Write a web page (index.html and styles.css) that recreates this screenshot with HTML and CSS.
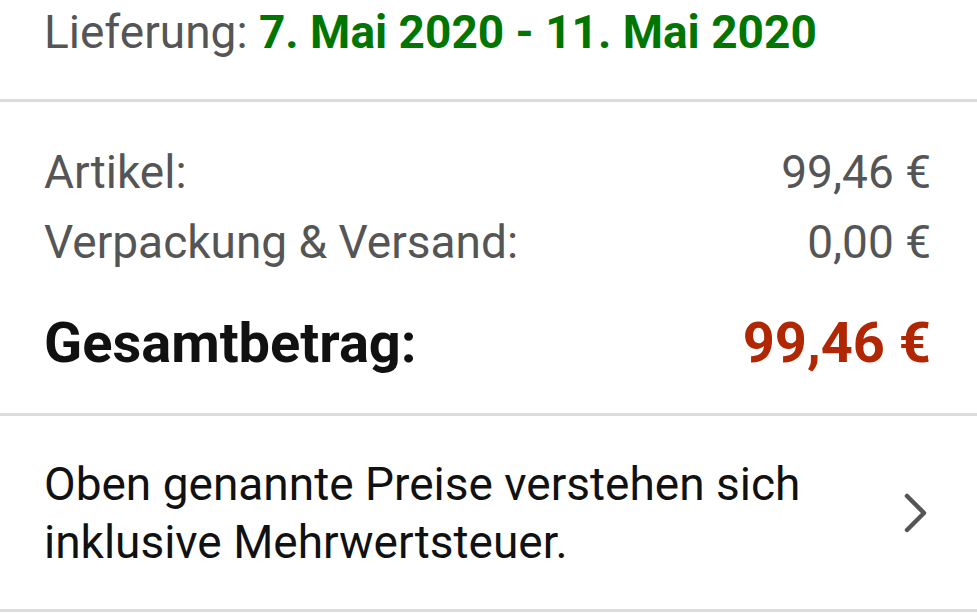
FILE: index.html
```html
<!DOCTYPE html>
<html lang="de">
<head>
<meta charset="utf-8">
<link rel="stylesheet" href="styles.css">
</head>
<body>
<div class="page">
  <section class="delivery">
    <span class="label">Lieferung:</span> <span class="date">7. Mai 2020 - 11. Mai 2020</span>
  </section>
  <section class="summary">
    <div class="row">
      <span>Artikel:</span><span>99,46 €</span>
    </div>
    <div class="row">
      <span>Verpackung &amp; Versand:</span><span>0,00 €</span>
    </div>
    <div class="row total">
      <span>Gesamtbetrag:</span><span class="price">99,46 €</span>
    </div>
  </section>
  <section class="vat">
    <p>Oben genannte Preise verstehen sich<br>inklusive Mehrwertsteuer.</p>
    <svg class="chev" width="26" height="40" viewBox="0 0 26 40"><path d="M4 3 L21 20 L4 37" fill="none" stroke="#555" stroke-width="4.5" stroke-linecap="round" stroke-linejoin="round"/></svg>
  </section>
</div>
</body>
</html>
```
FILE: styles.css
```css
html, body { margin: 0; padding: 0; background: #fff; }
body { font-family: Roboto, "Noto Sans", sans-serif; }
.page { width: 977px; }
.delivery {
  font-size: 46px;
  padding: 0 46px 0 44px;
  height: 102px;
  box-sizing: border-box;
  line-height: 64px;
  border-bottom: 3px solid #dcdcdc;
}
.delivery .label { color: #555; }
.delivery .date { color: #007600; font-weight: 700; }
.summary {
  padding: 35px 46px 35px 44px;
  border-bottom: 3px solid #dcdcdc;
  display: flex;
  flex-direction: column;
}
.row {
  display: flex;
  justify-content: space-between;
  font-size: 46px;
  line-height: 70px;
  color: #555;
}
.row.total {
  margin-top: 31px;
  font-size: 56px;
  font-weight: 700;
  color: #111;
}
.row.total .price { color: #b12704; }
.vat {
  display: flex;
  align-items: center;
  justify-content: space-between;
  padding: 39px 46px 38px 44px;
  border-bottom: 3px solid #dcdcdc;
}
.vat p {
  margin: 0;
  font-size: 46px;
  line-height: 58px;
  color: #111;
}
.chev { margin-right: 2px; }
```
